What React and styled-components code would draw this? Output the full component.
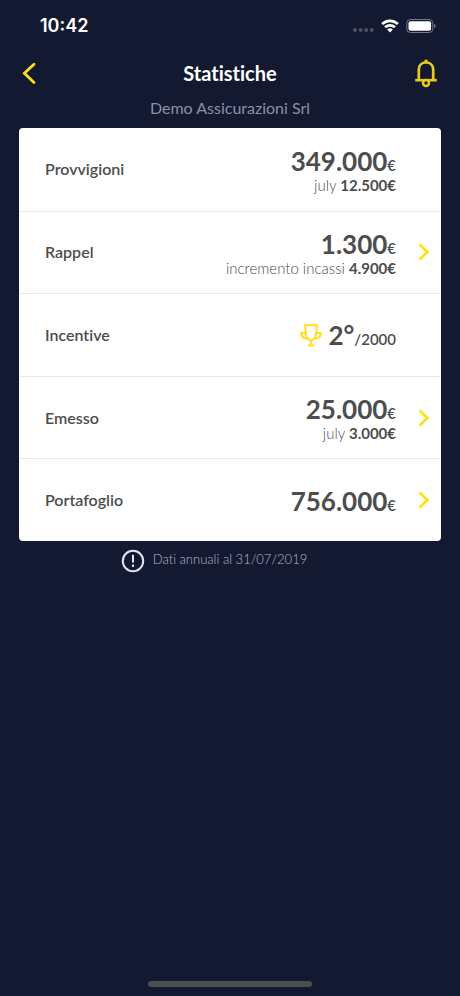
import React from "react";
import styled, { createGlobalStyle } from "styled-components";

const GlobalStyle = createGlobalStyle`
  *, *::before, *::after { box-sizing: border-box; }
  body { margin: 0; background: #141932; }
`;

const Screen = styled.div`
  display: flex;
  flex-direction: column;
  min-height: 100vh;
  background: #141932;
  color: #fff;
  font-family: Lato, "Open Sans", sans-serif;
  font-variant-ligatures: none;
`;

const StatusBar = styled.div`
  display: flex;
  align-items: center;
  justify-content: space-between;
  height: 50px;
  padding: 2px 24px 0 40px;
`;

const Clock = styled.time`
  font: 600 18px/22px Inter, sans-serif;
`;

const StatusIcons = styled.div`
  display: flex;
  align-items: center;
  gap: 6px;
`;

const Header = styled.header`
  display: grid;
  grid-template-columns: 40px 1fr 40px;
  align-items: center;
  height: 46px;
  padding: 0 14px;
`;

const Title = styled.h1`
  margin: 0;
  font-size: 20px;
  font-weight: 700;
  line-height: 24px;
  text-align: center;
`;

const IconButton = styled.button`
  display: flex;
  align-items: center;
  justify-content: ${({ $align }) => $align || "center"};
  width: 40px;
  height: 40px;
  padding: 0;
  border: 0;
  background: none;
  color: #ffe11b;
  cursor: pointer;
`;

const Company = styled.p`
  margin: 0;
  padding: 2px 0 10px;
  color: #8d90a0;
  font-size: 16px;
  line-height: 20px;
  text-align: center;
`;

const Card = styled.ul`
  display: grid;
  grid-auto-rows: 1fr;
  min-height: 413px;
  margin: 0 19px;
  padding: 0;
  border-radius: 4px;
  background: #fff;
  color: #4d4d4d;
  list-style: none;
`;

const Row = styled.li`
  display: grid;
  grid-template-columns: 1fr auto 45px;
  align-items: center;
  padding-left: 26px;

  & + & { border-top: 1px solid #e7e9ec; }
`;

const RowButton = styled(IconButton)`
  width: 45px;
  padding-right: 11px;
`;

const Label = styled.h2`
  margin: 0;
  font-size: 16px;
  font-weight: 600;
  line-height: 20px;
`;

const Figures = styled.div`
  text-align: right;
`;

const Amount = styled.div`
  display: flex;
  align-items: baseline;
  justify-content: flex-end;
  padding-top: 5px;
  font-size: 26px;
  font-weight: 700;
  line-height: 22px;
`;

const Unit = styled.span`
  font-size: 15px;
  font-weight: 600;
`;

const Detail = styled.div`
  font-size: 15px;
  font-weight: 300;
  line-height: 18px;

  strong { font-weight: 700; }
`;

const TrophyBox = styled.span`
  display: flex;
  align-self: center;
  margin: -4px 6px 0 0;
`;

const Note = styled.p`
  display: flex;
  align-items: flex-start;
  justify-content: center;
  gap: 8px;
  margin: 0;
  padding: 8px 32px 0 0;
  color: #b4b7c6;
  font-size: 13px;
  font-weight: 300;
  line-height: 20px;
`;

const HomeIndicator = styled.div`
  width: 164px;
  height: 6px;
  margin: auto auto 9px;
  border-radius: 3px;
  background: #4b504f;
`;

const SignalIcon = () => (
  <svg width="22" height="22" viewBox="0 0 22 22" fill="#4d5064" aria-hidden="true">
    {[3, 8.6, 14.2, 19.8].map((x) => <circle key={x} cx={x} cy="15" r="2" />)}
  </svg>
);

const WifiIcon = () => (
  <svg width="20" height="22" viewBox="0 0 20 22" fill="#fff" aria-hidden="true">
    <path d="M10 4.4c3.2 0 6.2 1.2 8.5 3.4.2.2.2.4 0 .6l-1.400 1.400c-.2.2-.4.2-.6 0A9.300 9.300 0 0 0 10 7.300a9.300 9.300 0 0 0-6.500 2.500c-.2.2-.4.2-.6 0L1.500 8.400c-.2-.2-.2-.4 0-.6A12.200 12.200 0 0 1 10 4.400z" />
    <path d="M10 8.900c2.100 0 4 .8 5.500 2.200.2.2.2.4 0 .6l-1.400 1.400c-.2.2-.4.2-.6 0a5 5 0 0 0-7 0c-.2.2-.4.2-.6 0l-1.400-1.400c-.2-.2-.2-.4 0-.6A8 8 0 0 1 10 8.900z" />
    <path d="M10 13.200c1 0 1.900.3 2.600 1 .2.2.2.4 0 .6l-2.300 2.400c-.2.2-.4.2-.6 0l-2.300-2.400c-.2-.2-.2-.4 0-.6.7-.7 1.600-1 2.600-1z" />
  </svg>
);

const BatteryIcon = () => (
  <svg width="30" height="22" viewBox="0 0 30 22" aria-hidden="true">
    <rect x="0.800" y="4.500" width="26" height="13" rx="3.600" fill="none" stroke="#777a89" />
    <rect x="2.500" y="6.200" width="22.600" height="9.600" rx="2" fill="#fff" />
    <path d="M28 9v4c1-.3 1.500-1.100 1.500-2S29 9.300 28 9z" fill="#777a89" />
  </svg>
);

const BackIcon = () => (
  <svg width="30" height="24" viewBox="0 0 30 24" fill="none" stroke="currentColor" strokeWidth="2.800" strokeLinecap="round" aria-hidden="true">
    <path d="M20 3.200L10.400 12.300L20 21.400" />
  </svg>
);

const BellIcon = () => (
  <svg width="24" height="30" viewBox="0 0 24 30" fill="none" stroke="#e9cb1d" aria-hidden="true">
    <path d="M12 1.700v3" strokeWidth="3" />
    <path d="M4.800 22V11.500C4.800 7.200 7.800 4.500 12 4.500s7.200 2.700 7.200 7V22" strokeWidth="2.700" />
    <path d="M1.200 22.200h21.600" strokeWidth="2.600" />
    <circle cx="12" cy="25" r="3" fill="#141932" strokeWidth="2.500" />
  </svg>
);

const ChevronIcon = () => (
  <svg width="12" height="18" viewBox="0 0 12 18" fill="none" stroke="currentColor" strokeWidth="2.800" aria-hidden="true">
    <path d="M1.500 1.500L9.500 9l-8 7.500" />
  </svg>
);

const TrophyIcon = () => (
  <svg width="22" height="24" viewBox="0 0 22 24" fill="none" stroke="#ffe02e" strokeWidth="2.200" aria-hidden="true">
    <path d="M5.300 2.200h11.400c-.2 7-.6 10.300-1.700 12.600L12.600 17H9.400L7 14.800C5.900 12.500 5.500 9.200 5.300 2.200z" />
    <path d="M6.300 10.200H1.200c0 3 2 5.200 6 5.200M15.700 10.200h5.100c0 3-2 5.200-6 5.200" />
    <path d="M11 17v5M7.700 22.300h6.600" />
  </svg>
);

const AlertIcon = () => (
  <svg width="24" height="24" viewBox="0 0 24 24" fill="none" stroke="#e3e4ec" strokeWidth="2" aria-hidden="true">
    <circle cx="12" cy="12" r="10.200" />
    <path d="M12 5.800v7.800M12 15.600v2.300" />
  </svg>
);

const statistics = [
  { label: "Provvigioni", value: "349.000", unit: "€", detail: "july", amount: "12.500€" },
  { label: "Rappel", value: "1.300", unit: "€", detail: "incremento incassi", amount: "4.900€", link: true },
  { label: "Incentive", value: "2°", unit: "/2000", trophy: true },
  { label: "Emesso", value: "25.000", unit: "€", detail: "july", amount: "3.000€", link: true },
  { label: "Portafoglio", value: "756.000", unit: "€", link: true },
];

function StatisticRow({ label, value, unit, detail, amount, trophy, link }) {
  return (
    <Row>
      <Label>{label}</Label>
      <Figures>
        <Amount>
          {trophy && <TrophyBox><TrophyIcon /></TrophyBox>}
          {value}<Unit>{unit}</Unit>
        </Amount>
        {detail && <Detail>{detail} <strong>{amount}</strong></Detail>}
      </Figures>
      {link && <RowButton $align="flex-end" aria-label={label}><ChevronIcon /></RowButton>}
    </Row>
  );
}

export default function App() {
  return (
    <>
      <GlobalStyle />
      <Screen>
        <StatusBar>
          <Clock>10:42</Clock>
          <StatusIcons><SignalIcon /><WifiIcon /><BatteryIcon /></StatusIcons>
        </StatusBar>
        <Header>
          <IconButton $align="flex-start" aria-label="Indietro"><BackIcon /></IconButton>
          <Title>Statistiche</Title>
          <IconButton $align="center" aria-label="Notifiche"><BellIcon /></IconButton>
        </Header>
        <Company>Demo Assicurazioni Srl</Company>
        <Card>
          {statistics.map((item) => <StatisticRow key={item.label} {...item} />)}
        </Card>
        <Note><AlertIcon />Dati annuali al 31/07/2019</Note>
        <HomeIndicator />
      </Screen>
    </>
  );
}
